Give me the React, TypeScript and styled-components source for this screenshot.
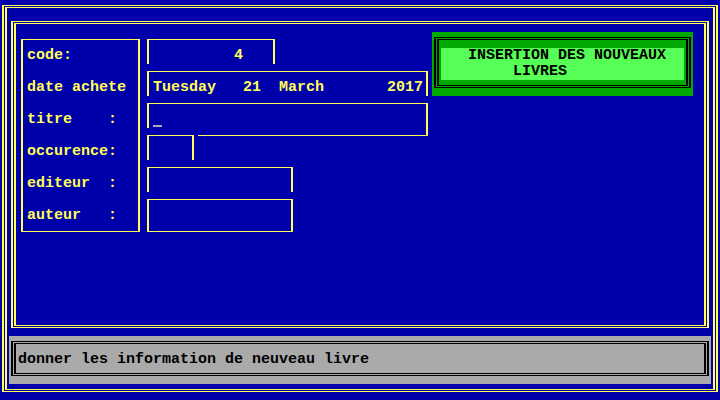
import React from 'react';
import styled, { createGlobalStyle } from 'styled-components';

const C = {
  blue: '#0000AA',
  yellow: '#FFFF55',
  green: '#00AA00',
  lightGreen: '#55FF55',
  gray: '#AAAAAA',
  black: '#000000',
};

const Global = createGlobalStyle`
  html, body { margin: 0; padding: 0; background: ${C.blue}; }
  #root { width: 720px; height: 400px; }
`;

const Screen = styled.div`
  box-sizing: border-box;
  width: 720px;
  height: 400px;
  padding: 5px 2px 8px 2px;
  display: flex;
  background: ${C.blue};
  color: ${C.yellow};
  font-family: "Liberation Mono", "DejaVu Sans Mono", monospace;
  font-weight: bold;
  font-size: 15px;
  line-height: 16px;
  overflow: hidden;
`;

/* double line frame: two lines, horizontal 1px, vertical 2px, 1px apart */
const DoubleFrame = styled.div<{ $color: string }>`
  box-sizing: border-box;
  display: flex;
  flex: 1;
  border-style: solid;
  border-color: ${(p) => p.$color};
  border-width: 1px 2px;
  padding: 1px;
`;

const DoubleFrameInner = styled.div<{ $color: string }>`
  box-sizing: border-box;
  display: flex;
  flex-direction: column;
  flex: 1;
  min-width: 0;
  border-style: solid;
  border-color: ${(p) => p.$color};
  border-width: 1px 2px;
`;

const MainFrame = styled(DoubleFrame)`
  flex: none;
  height: 307px;
  margin: 13px 4px 0;
`;

const FormArea = styled(DoubleFrameInner)`
  flex-direction: row;
  align-items: flex-start;
`;

const LabelBox = styled.div`
  box-sizing: border-box;
  width: 119px;
  margin: 15px 0 0 5px;
  padding: 8px 0 7px 4px;
  border: solid ${C.yellow};
  border-width: 1px 2px;
  display: flex;
  flex-direction: column;
  gap: 16px;
`;

const Label = styled.div`
  height: 16px;
  white-space: pre;
`;

const FieldsColumn = styled.div`
  width: 281px;
  margin: 8px 0 0 7px;
  display: flex;
  flex-direction: column;
`;

const Field = styled.div<{ $w: number; $closed?: boolean }>`
  box-sizing: border-box;
  width: ${(p) => p.$w}px;
  height: ${(p) => (p.$closed ? 33 : 25)}px;
  margin-top: 7px;
  padding: 8px 0 0 4px;
  border: solid ${C.yellow};
  border-width: 1px 2px ${(p) => (p.$closed ? 1 : 0)}px;
  white-space: pre;
`;

const SharedRow = styled.div`
  height: 32px;
  display: flex;
  align-items: flex-start;
`;

const FieldTail = styled.div`
  box-sizing: border-box;
  width: 230px;
  height: 8px;
  margin-left: 4px;
  border: solid ${C.yellow};
  border-width: 0 2px 1px 0;
`;

const Cursor = styled.span`
  display: inline-block;
  box-sizing: border-box;
  width: 9px;
  height: 15px;
  vertical-align: top;
  border-bottom: 2px solid ${C.gray};
`;

const Banner = styled.div`
  box-sizing: border-box;
  width: 261px;
  height: 64px;
  margin: 8px 0 0 4px;
  padding: 5px 2px 8px;
  display: flex;
  background: ${C.green};
`;

const BannerFill = styled(DoubleFrameInner)`
  padding: 8px 2px 5px;
`;

const BannerText = styled.div`
  flex: 1;
  background: ${C.lightGreen};
  color: ${C.black};
  white-space: pre;
`;

const StatusBar = styled.div`
  box-sizing: border-box;
  height: 48px;
  margin: 8px 2px 0;
  padding: 5px 2px 8px;
  display: flex;
  background: ${C.gray};
  color: ${C.black};
`;

const StatusText = styled(DoubleFrameInner)`
  padding: 8px 0 0 2px;
  white-space: pre;
`;

const labels = ['code:', 'date achete', 'titre    :', 'occurence:', 'editeur  :', 'auteur   :'];

export default function App() {
  return (
    <>
      <Global />
      <Screen>
        <DoubleFrame $color={C.yellow}>
          <DoubleFrameInner $color={C.yellow}>
            <MainFrame $color={C.yellow}>
              <FormArea $color={C.yellow}>
                <LabelBox>
                  {labels.map((l) => (
                    <Label key={l}>{l}</Label>
                  ))}
                </LabelBox>
                <FieldsColumn>
                  <Field $w={128}>{'         4'}</Field>
                  <Field $w={281}>{'Tuesday   21  March       2017'}</Field>
                  <Field $w={281}>
                    <Cursor />
                  </Field>
                  <SharedRow>
                    <Field $w={47} />
                    <FieldTail />
                  </SharedRow>
                  <Field $w={146} />
                  <Field $w={146} $closed />
                </FieldsColumn>
                <Banner>
                  <DoubleFrame $color={C.black}>
                    <BannerFill $color={C.black}>
                      <BannerText>
                        {'   INSERTION DES NOUVEAUX\n        LIVRES'}
                      </BannerText>
                    </BannerFill>
                  </DoubleFrame>
                </Banner>
              </FormArea>
            </MainFrame>
            <StatusBar>
              <DoubleFrame $color={C.black}>
                <StatusText $color={C.black}>donner les information de neuveau livre</StatusText>
              </DoubleFrame>
            </StatusBar>
          </DoubleFrameInner>
        </DoubleFrame>
      </Screen>
    </>
  );
}
